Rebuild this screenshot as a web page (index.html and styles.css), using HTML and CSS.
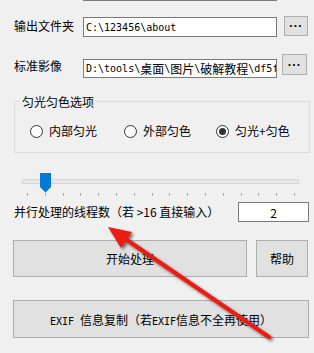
FILE: index.html
```html
<!DOCTYPE html>
<html lang="zh-CN">
<head>
<meta charset="utf-8">
<title>匀光匀色</title>
<link rel="stylesheet" href="styles.css">
</head>
<body>
<div class="form">
  <div class="topedge"></div>

  <div class="row row1">
    <span class="lbl">输出文件夹</span>
    <div class="tb tb1"><span class="m">C:\123456\about</span></div>
    <button class="btn dots dots1">···</button>
  </div>

  <div class="row row2">
    <span class="lbl">标准影像</span>
    <div class="tb tb2"><span class="m">D:\tools\</span><span class="c">桌面</span><span class="m">\</span><span class="c">图片</span><span class="m">\</span><span class="c">破解教程</span><span class="m">\df5f</span></div>
    <button class="btn dots dots2">···</button>
  </div>

  <fieldset class="group">
    <legend class="legend">匀光匀色选项</legend>
    <div class="radios">
      <div class="radio"><span class="circle"></span><span>内部匀光</span></div>
      <div class="radio"><span class="circle"></span><span>外部匀色</span></div>
      <div class="radio"><span class="circle on"></span><span>匀光+匀色</span></div>
    </div>
  </fieldset>

  <div class="slider">
    <div class="track"></div>
    <svg class="thumb" width="11" height="20" viewBox="0 0 11 20"><polygon points="0,0 11,0 11,14 5.5,19.5 0,14" fill="#0078d7"/></svg>
    <div class="ticks">
      <i></i><i></i><i></i><i></i><i></i><i></i><i></i><i></i><i></i><i></i><i></i><i></i><i></i><i></i><i></i><i></i>
    </div>
  </div>

  <div class="row row3">
    <span class="lbl lbl3">并行处理的线程数（若 &gt;16 直接输入）</span>
    <div class="tb tb3">2</div>
  </div>

  <div class="row row4">
    <button class="btn big start">开始处理</button>
    <button class="btn big help">帮助</button>
  </div>

  <div class="row row5">
    <button class="btn big exif"><span class="m">EXIF </span>信息复制（若<span class="m">EXIF</span>信息不全再使用）</button>
  </div>
</div>

<svg class="arrow" width="314" height="353" viewBox="0 0 314 353">
  <defs>
    <filter id="sh" x="-20%" y="-20%" width="140%" height="140%">
      <feDropShadow dx="2" dy="2" stdDeviation="1.6" flood-color="#000" flood-opacity="0.55"/>
    </filter>
  </defs>
  <g filter="url(#sh)">
    <line x1="124" y1="238" x2="269" y2="337" stroke="#ea1a12" stroke-width="4" stroke-linecap="round"/>
    <polygon points="108,227 132,232 121,248" fill="#ea1a12"/>
  </g>
</svg>
</body>
</html>
```

FILE: styles.css
```css
* { box-sizing: border-box; }
html, body { margin: 0; padding: 0; }
body {
  width: 314px;
  height: 353px;
  overflow: hidden;
  position: relative;
  background: #f0f0f0;
  font-family: "Noto Sans CJK SC", "Microsoft YaHei", sans-serif;
  font-size: 12px;
  color: #000;
}
.topedge {
  margin-left: 83px;
  width: 194px;
  height: 1px;
  background: #7a7a7a;
}
.row { display: flex; align-items: flex-start; }
.lbl {
  width: 83px;
  padding-left: 14px;
  line-height: 16px;
  white-space: nowrap;
}
.m {
  font-family: "DejaVu Sans Mono", "Liberation Mono", monospace;
  font-size: 10px;
}
.c { font-size: 12px; }
.tb {
  display: flex;
  align-items: center;
  background: #fff;
  border: 1px solid #7a7a7a;
  padding: 0 2px;
  white-space: nowrap;
  overflow: hidden;
  width: 194px;
}
.btn {
  font-family: "Noto Sans CJK SC", "Microsoft YaHei", sans-serif;
  font-size: 12px;
  color: #000;
  background: #e1e1e1;
  border: 1px solid #adadad;
  padding: 0;
  margin: 0;
}
.dots {
  font-family: "Liberation Sans", sans-serif;
  font-weight: bold;
  font-size: 12px;
  line-height: 12px;
  letter-spacing: 0.5px;
}

.row1 { margin-top: 15px; }
.row1 .lbl { margin-top: 2px; }
.tb1 { margin-top: 1px; height: 20px; }
.dots1 { margin-left: 7px; width: 24px; height: 20px; }

.row2 { margin-top: 17px; }
.row2 .lbl { margin-top: 4px; }
.tb2 { margin-top: 5px; height: 19px; }
.dots2 { margin-left: 5px; width: 25px; height: 21px; }

.group {
  margin: 15px 4px 0 14px;
  padding: 0 0 13px 0;
  border: 1px solid #dcdcdc;
  min-width: 0;
}
.legend {
  margin-left: 5px;
  padding: 0 2px;
  line-height: 17px;
}
.radios {
  display: grid;
  grid-template-columns: 94px 92px auto;
  margin: 13px 0 0 15px;
}
.radio {
  display: flex;
  align-items: center;
  gap: 6px;
  line-height: 16px;
}
.circle {
  width: 13px;
  height: 13px;
  border-radius: 50%;
  border: 1px solid #333;
  background: #fff;
  display: flex;
  align-items: center;
  justify-content: center;
}
.circle.on::after {
  content: "";
  width: 7px;
  height: 7px;
  border-radius: 50%;
  background: #333;
}

.slider {
  position: relative;
  margin: 26px 15px 0 22px;
}
.track {
  height: 5px;
  background: #e7e7e7;
  border: 1px solid #d6d6d6;
}
.thumb {
  position: absolute;
  left: 18px;
  top: -6px;
}
.ticks {
  display: flex;
  justify-content: space-between;
  margin: 9px 4px 0 5px;
  height: 3px;
}
.ticks i {
  display: block;
  width: 1px;
  height: 3px;
  background: #a8a8a8;
}

.row3 { margin-top: 6px; justify-content: space-between; }
.lbl3 { width: auto; margin-top: 2px; }
.tb3 {
  width: 71px;
  height: 20px;
  margin-right: 5px;
  justify-content: center;
}

.row4 { margin-top: 18px; padding-left: 13px; gap: 9px; }
.big { height: 37px; }
.start { width: 234px; }
.help { width: 52px; }

.row5 { margin-top: 23px; padding-left: 13px; }
.exif { width: 296px; height: 38px; }

.arrow {
  position: absolute;
  left: 0;
  top: 0;
  pointer-events: none;
}
```
